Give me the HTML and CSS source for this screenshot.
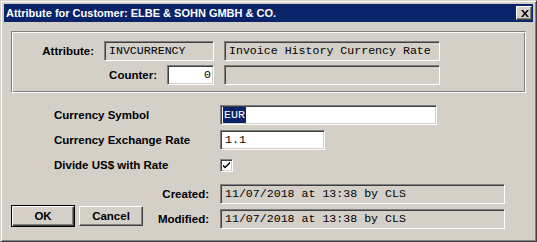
FILE: index.html
```html
<!DOCTYPE html>
<html lang="en">
<head>
<meta charset="UTF-8" />
<title>Attribute for Customer</title>
<link rel="stylesheet" href="styles.css">
</head>
<body>

<div class="window">
  <div class="titlebar">
    <span class="title">Attribute for Customer: ELBE &amp; SOHN GMBH &amp; CO.</span>
    <button class="close" type="button">
      <svg width="8" height="7" viewBox="0 0 8 7"><path d="M0 0h2l2 2.5L6 0h2L5 3.5 8 7H6L4 4.5 2 7H0l3-3.5z" fill="#000"/></svg>
    </button>
  </div>

  <div class="client">
    <div class="group">
      <div class="grow">
        <div class="lead">
          <span class="lbl">Attribute:</span>
          <div class="field ro w-code">INVCURRENCY</div>
        </div>
        <div class="field ro w-desc">Invoice History Currency Rate</div>
      </div>
      <div class="grow">
        <div class="lead">
          <span class="lbl">Counter:</span>
          <div class="field num w-count">0</div>
        </div>
        <div class="field ro w-desc"></div>
      </div>
    </div>

    <div class="settings">
      <span class="lbl">Currency Symbol</span>
      <div class="field w-symbol"><span class="sel">EUR</span></div>
      <span class="lbl">Currency Exchange Rate</span>
      <div class="field w-rate">1.1</div>
      <span class="lbl">Divide US$ with Rate</span>
      <span class="check">
        <svg width="9" height="9" viewBox="0 0 9 9"><path d="M1 3.5l2 2 5-5v2l-5 5-2-2z" fill="#000"/></svg>
      </span>
    </div>

    <div class="footer">
      <div class="buttons">
        <button class="btn default" type="button">OK</button>
        <button class="btn" type="button">Cancel</button>
      </div>
      <div class="stamps">
        <span class="lbl">Created:</span>
        <div class="field ro">11/07/2018 at 13:38 by CLS</div>
        <span class="lbl">Modified:</span>
        <div class="field ro">11/07/2018 at 13:38 by CLS</div>
      </div>
    </div>
  </div>
</div>

</body>
</html>
```

FILE: styles.css
```css
* { box-sizing: border-box; margin:0; padding:0; }
body {
  background:#d4d0c8; width:537px; height:242px; overflow:hidden;
  font-family: "Liberation Sans", Arial, sans-serif;
}
.window {
  width:537px; height:242px;
  background:#d4d0c8;
  border:1px solid; border-color:#d4d0c8 #404040 #404040 #d4d0c8;
  box-shadow: inset 1px 1px 0 #fff, inset -1px -1px 0 #808080;
  padding:3px;
  display:flex; flex-direction:column;
}
.titlebar {
  height:18px;
  background:#0a246a;
  display:flex; align-items:center; justify-content:space-between;
  padding:0 1px 0 2px;
}
.title { color:#fff; font-weight:700; font-size:11px; white-space:nowrap; }
.close {
  width:16px; height:14px;
  background:#d4d0c8;
  border:1px solid; border-color:#fff #404040 #404040 #fff;
  box-shadow: inset -1px -1px 0 #808080;
  display:flex; align-items:center; justify-content:center;
  padding-left:1px;
}
.close svg { display:block; }

.client { padding:9px 7px 0 7px; flex:1; }

.lbl { font-size:11.5px; font-weight:700; color:#000; white-space:nowrap; }

.field {
  height:20px;
  background:#fff;
  border:1px solid; border-color:#808080 #fff #fff #808080;
  box-shadow: inset 1px 1px 0 #404040, inset -1px -1px 0 #d4d0c8;
  font-family: "Liberation Mono", "Courier New", monospace;
  font-size:11.6px; line-height:18px;
  padding:0 2px 0 4px;
  white-space:nowrap; overflow:hidden;
  color:#000;
}
.field.ro { background:#d4d0c8; }
.field.num { text-align:right; }

/* group box */
.group {
  height:62px;
  border:1px solid; border-color:#808080 #fff #fff #808080;
  box-shadow: inset 1px 1px 0 #fff, inset -1px -1px 0 #808080;
  padding-top:9px;
  display:flex; flex-direction:column; gap:4px;
}
.grow { display:flex; align-items:center; gap:10px; }
.lead { width:202px; display:flex; align-items:center; justify-content:flex-end; gap:10px; }
.w-code { width:110px; }
.w-count { width:47px; }
.w-desc { width:216px; }

/* settings */
.settings {
  margin-top:12px;
  padding-left:43px;
  display:grid;
  grid-template-columns:166px auto;
  grid-auto-rows:20px;
  row-gap:5px;
  align-items:center;
}
.w-symbol { width:217px; padding-left:2px; }
.w-rate { width:105px; }
.sel { background:#0a246a; color:#fff; padding:0 1px; display:inline-block; line-height:16px; }
.check {
  width:13px; height:13px;
  background:#fff;
  border:1px solid; border-color:#808080 #fff #fff #808080;
  box-shadow: inset 1px 1px 0 #404040, inset -1px -1px 0 #d4d0c8;
  display:flex; align-items:center; justify-content:center;
}
.check svg { display:block; }

/* footer */
.footer { margin-top:9px; display:flex; }
.buttons { margin-top:21px; display:flex; align-items:center; gap:4px; height:22px; }
.btn {
  width:64px; height:20px;
  background:#d4d0c8;
  border:1px solid; border-color:#fff #404040 #404040 #fff;
  box-shadow: inset -1px -1px 0 #808080;
  font-family: "Liberation Sans", Arial, sans-serif;
  font-size:11.5px; font-weight:700; color:#000;
}
.btn.default {
  height:22px;
  outline:none;
  border:1px solid #000;
  box-shadow: inset 1px 1px 0 #fff, inset -1px -1px 0 #404040, inset -2px -2px 0 #808080;
}
.stamps {
  margin-left:auto; margin-right:21px;
  display:grid;
  grid-template-columns:60px 285px;
  column-gap:11px;
  grid-auto-rows:20px;
  row-gap:5px;
  align-items:center;
}
.stamps .lbl { text-align:right; }
```
